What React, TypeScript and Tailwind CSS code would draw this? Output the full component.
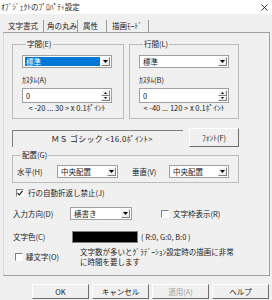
function DropArrow() {
  return (
    <div className="w-[9px] h-full bg-[#f0f0f0] border border-t-white border-l-white border-r-[#808080] border-b-[#808080] flex items-center justify-center">
      <svg width="5" height="3" viewBox="0 0 5 3">
        <path d="M0 0h5L2.5 3z" fill="#000" />
      </svg>
    </div>
  );
}

function Combo(props: { value: string; width: string; selected?: boolean }) {
  return (
    <div
      className={`${props.width} h-[13px] bg-white border border-[#a0a0a0] flex items-stretch p-[1px]`}
    >
      <div className="flex-1 flex items-center pl-[1px] pr-[1px]">
        <span
          className={
            props.selected
              ? "w-full h-full bg-[#0078d7] text-white pl-[1px] leading-[9px] flex items-center"
              : "pl-[1px] leading-[9px]"
          }
        >
          {props.value}
        </span>
      </div>
      <DropArrow />
    </div>
  );
}

function Spin(props: { value: string }) {
  return (
    <div className="w-[90px] h-[15px] bg-white border border-[#a0a0a0] flex items-stretch p-[1px]">
      <span className="flex-1 pl-[2px] leading-[11px]">{props.value}</span>
      <div className="w-[9px] flex flex-col">
        <div className="flex-1 bg-[#f0f0f0] border border-t-white border-l-white border-r-[#808080] border-b-[#808080] flex items-center justify-center">
          <svg width="3" height="2" viewBox="0 0 3 2">
            <path d="M1.5 0L3 2H0z" fill="#000" />
          </svg>
        </div>
        <div className="flex-1 bg-[#f0f0f0] border border-t-white border-l-white border-r-[#808080] border-b-[#808080] flex items-center justify-center">
          <svg width="3" height="2" viewBox="0 0 3 2">
            <path d="M0 0h3L1.5 2z" fill="#000" />
          </svg>
        </div>
      </div>
    </div>
  );
}

function Check(props: { checked?: boolean }) {
  return (
    <div className="w-[8px] h-[8px] bg-white border border-t-[#808080] border-l-[#808080] border-r-white border-b-white flex items-center justify-center">
      {props.checked ? (
        <svg width="6" height="6" viewBox="0 0 6 6">
          <path d="M0.5 3L2.3 5L5.5 0.8" stroke="#000" strokeWidth="1.1" fill="none" />
        </svg>
      ) : null}
    </div>
  );
}

function Btn(props: { label: string; disabled?: boolean; className?: string }) {
  return (
    <div
      className={`${props.className ?? "w-[57px] h-[15px]"} bg-[#f0f0f0] border border-t-white border-l-white border-r-[#6d6d6d] border-b-[#6d6d6d] flex items-center justify-center whitespace-nowrap ${
        props.disabled ? "text-[#a0a0a0]" : "text-[#222]"
      }`}
    >
      {props.label}
    </div>
  );
}

function SpacingGroup(props: {
  legend: string;
  value: string;
  selected?: boolean;
  customLabel: string;
  range: string;
  width: string;
}) {
  return (
    <fieldset className={`${props.width} h-[80px] border border-[#bcbcbc] pl-[9px]`}>
      <legend className="ml-[4px] px-[1px] leading-[10px]">{props.legend}</legend>
      <div className="mt-[6px]">
        <Combo value={props.value} width="w-[90px]" selected={props.selected} />
      </div>
      <div className="mt-[7px] leading-[10px]">{props.customLabel}</div>
      <div className="mt-[3px]">
        <Spin value="0" />
      </div>
      <div className="w-[90px] text-center leading-[10px]">{props.range}</div>
    </fieldset>
  );
}

export default function App() {
  return (
    <div
      className="w-[272px] h-[300px] bg-[#f0f0f0] text-[7.5px] text-[#222] whitespace-nowrap overflow-hidden"
      style={{ fontFamily: '"Noto Sans CJK JP", "Noto Sans", sans-serif' }}
    >
      <div className="h-[14px] bg-white flex items-center justify-between pl-[1px] pr-[4px]">
        <span className="leading-[10px]">ｵﾌﾞｼﾞｪｸﾄのﾌﾟﾛﾊﾟﾃｨ設定</span>
        <svg width="7" height="7" viewBox="0 0 7 7">
          <path d="M0.5 0.5l6 6M6.5 0.5l-6 6" stroke="#222" strokeWidth="0.9" />
        </svg>
      </div>

      <div className="h-[18px] flex items-end pl-[3px]">
        <div className="w-[41px] h-[12px] border-r border-[#9a9a9a] pl-[5px] leading-[11px]">文字書式</div>
        <div className="w-[34px] h-[12px] border-r border-[#9a9a9a] pl-[3px] leading-[11px]">角の丸み</div>
        <div className="w-[29px] h-[12px] border-r border-[#9a9a9a] pl-[5px] leading-[11px]">属性</div>
        <div className="w-[42px] h-[12px] border-r border-[#9a9a9a] pl-[5px] leading-[11px]">描画ﾓｰﾄﾞ</div>
      </div>

      <div className="ml-[3px] w-[267px] h-[244px] border border-t-[#a0a0a0] border-l-[#d8d8d8] border-r-[#a0a0a0] border-b-[#a0a0a0] pl-[8px] pt-[6px]">
        <div className="flex gap-[5px]">
          <SpacingGroup
            legend="字間(E)"
            value="標準"
            selected
            customLabel="ｶｽﾀﾑ(A)"
            range="< -20 ... 30 > x 0.1ﾎﾟｲﾝﾄ"
            width="w-[112px]"
          />
          <SpacingGroup
            legend="行間(L)"
            value="標準"
            customLabel="ｶｽﾀﾑ(B)"
            range="< -40 ... 120 > x 0.1ﾎﾟｲﾝﾄ"
            width="w-[110px]"
          />
        </div>

        <div className="mt-[9px] h-[19px] flex items-end gap-[6px]">
          <div className="w-[171px] h-[17px] border-t border-l border-[#808080] flex items-center justify-center text-[8px] tracking-[0.3px] pl-[8px]">
            ＭＳ ゴシック &lt;16.0ﾎﾟｲﾝﾄ&gt;
          </div>
          <Btn label="ﾌｫﾝﾄ(F)" className="w-[50px] h-[19px]" />
        </div>

        <fieldset className="mt-[3px] w-[227px] h-[33px] border border-[#bcbcbc] pl-[4px]">
          <legend className="ml-[4px] px-[1px] leading-[10px]">配置(G)</legend>
          <div className="mt-[5px] flex items-center">
            <span className="w-[40px] leading-[10px]">水平(H)</span>
            <Combo value="中央配置" width="w-[61px]" />
            <span className="w-[37px] ml-[14px] leading-[10px]">垂直(V)</span>
            <Combo value="中央配置" width="w-[60px]" />
          </div>
        </fieldset>

        <div className="mt-[5px] h-[10px] flex items-center pl-[4px] gap-[4px]">
          <Check checked />
          <span className="leading-[10px]">行の自動折返し禁止(J)</span>
        </div>

        <div className="mt-[9px] h-[13px] flex items-center pl-[1px]">
          <span className="w-[57px] leading-[10px]">入力方向(D)</span>
          <Combo value="横書き" width="w-[62px]" />
          <div className="ml-[29px] flex items-center gap-[4px]">
            <Check />
            <span className="leading-[10px]">文字枠表示(R)</span>
          </div>
        </div>

        <div className="mt-[11px] h-[12px] flex items-center pl-[1px]">
          <span className="w-[59px] leading-[10px]">文字色(C)</span>
          <div className="w-[66px] h-[12px] bg-black border border-[#808080]" />
          <span className="ml-[3px] leading-[10px]">( R:0, G:0, B:0 )</span>
        </div>

        <div className="mt-[4px] flex items-center">
          <div className="pl-[3px] flex items-center gap-[3px] w-[68px]">
            <Check />
            <span className="leading-[10px]">縁文字(O)</span>
          </div>
          <div className="leading-[10px] text-[7.5px]">
            <div>文字数が多いとｸﾞﾗﾃﾞｰｼｮﾝ設定時の描画に非常</div>
            <div>に時間を要します</div>
          </div>
        </div>
      </div>

      <div className="mt-[8px] flex justify-end gap-[3px] pr-[3px]">
        <Btn label="OK" />
        <Btn label="キャンセル" />
        <Btn label="適用(A)" disabled />
        <Btn label="ヘルプ" />
      </div>
    </div>
  );
}
